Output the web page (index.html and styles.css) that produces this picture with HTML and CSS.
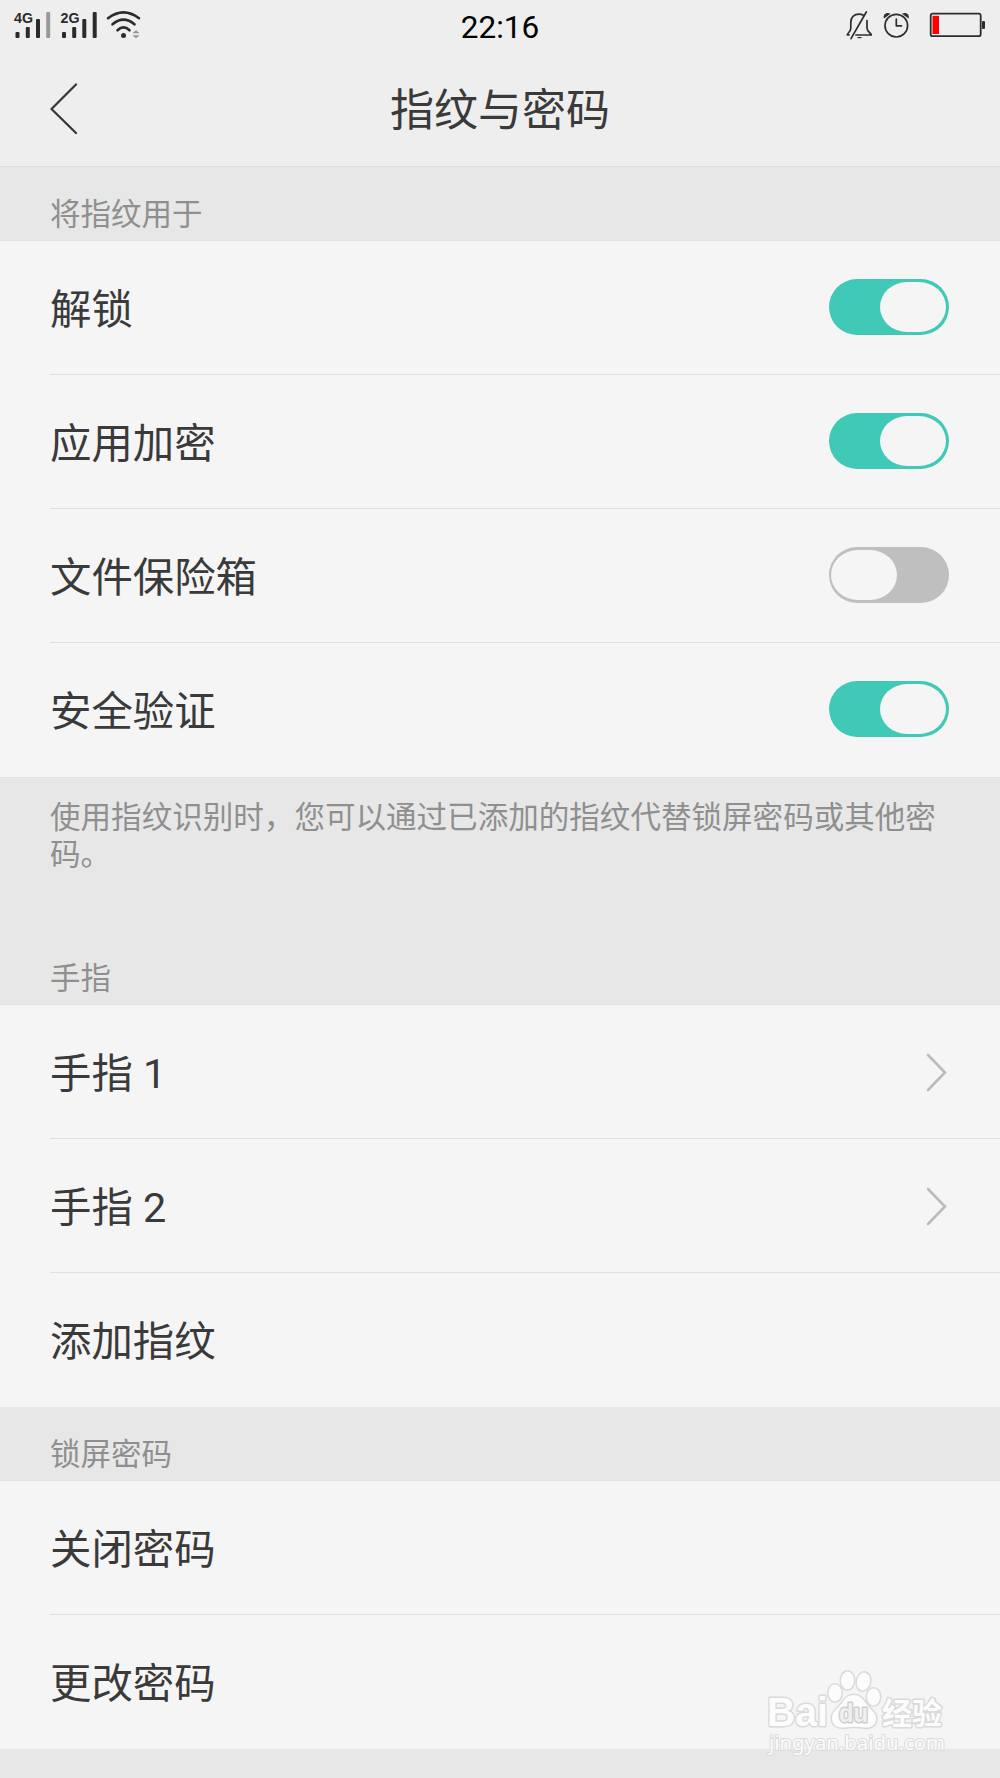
FILE: index.html
```html
<!DOCTYPE html>
<html lang="zh-CN">
<head>
  <meta charset="UTF-8" />
  <meta name="viewport" content="width=device-width, initial-scale=1.0"/>
  <title>指纹与密码</title>
  <link rel="stylesheet" href="styles.css">
</head>
<body>

  <!-- Status bar -->
  <div class="status-bar">
    <svg class="status-left" width="160" height="50" viewBox="0 0 160 50">
      <text class="net" x="14" y="22.500" textLength="19" lengthAdjust="spacingAndGlyphs">4G</text>
      <g fill="#2b2b2b">
        <rect x="15.5" y="32" width="4" height="6" rx="1"/>
        <rect x="25.8" y="27" width="4" height="11" rx="1"/>
        <rect x="36" y="19" width="4" height="19" rx="1"/>
        <rect x="46.2" y="12" width="4" height="26" rx="1" fill="#999"/>
      </g>
      <text class="net" x="60.5" y="22.500" textLength="19" lengthAdjust="spacingAndGlyphs">2G</text>
      <g fill="#2b2b2b">
        <rect x="62" y="32" width="4" height="6" rx="1"/>
        <rect x="72.2" y="27" width="4" height="11" rx="1"/>
        <rect x="82.3" y="19" width="4" height="19" rx="1"/>
        <rect x="92.7" y="12" width="4" height="26" rx="1"/>
      </g>
      <g fill="none" stroke="#2b2b2b" stroke-width="2.6" stroke-linecap="round">
        <path d="M108 18.2Q123.500 6.500 139 18.2"/>
        <path d="M112.500 24.300Q123.500 15 134.500 24.300"/>
        <path d="M117.500 30.300Q123.500 24.500 129.500 30.300"/>
      </g>
      <circle cx="123.500" cy="35.500" r="2.500" fill="#2b2b2b"/>
      <path d="M136 30.500L139 33H133ZM133 35.500H139L136 38Z" fill="#999" stroke="#999" stroke-width=".6"/>
    </svg>
    <span class="clock">22:16</span>
    <svg class="status-right" width="170" height="50" viewBox="0 0 170 50">
      <g fill="none" stroke="#2e2e2e" stroke-width="1.7" stroke-linecap="round" stroke-linejoin="round">
        <path d="M19 34.800H17.300C17.300 32.800 20.800 32.300 20.800 28V22.500C20.800 17 24 14.200 29 14.200C31 14.200 32.500 14.700 33.700 15.500M37 20.500V28C37 32.300 41.300 32.800 41.300 35H26"/>
        <path d="M36.300 12L21 38.700"/>
        <circle cx="66.300" cy="25.700" r="11.300"/>
        <path d="M66.300 19V25.800H71.500"/>
      </g>
      <path d="M27.500 37H31.500V38.200H27.500Z" fill="#2e2e2e"/>
      <path d="M54 18.500C52.500 14.500 56.500 11.500 60.500 13.700ZM78.600 18.500C80 14.500 76 11.500 72 13.700Z" fill="#2e2e2e"/>
      <rect x="100.700" y="13.700" width="50" height="22.500" rx="2" fill="none" stroke="#2e2e2e" stroke-width="1.800"/>
      <rect x="102.500" y="15.800" width="6.500" height="18.200" fill="#f00"/>
      <rect x="152" y="21" width="3" height="8" rx="1" fill="#2e2e2e"/>
    </svg>
  </div>

  <!-- Title bar -->
  <div class="title-bar">
    <svg class="back" width="28" height="52" viewBox="0 0 28 52">
      <path d="M26 1.500L1.500 26L26 50" fill="none" stroke="#383838" stroke-width="2.300" stroke-linecap="round" stroke-linejoin="round"/>
    </svg>
    <h1>指纹与密码</h1>
  </div>

  <h2 class="section-title">将指纹用于</h2>
  <ul class="list">
    <li class="row"><span class="label">解锁</span><span class="switch on"></span></li>
    <li class="row"><span class="label">应用加密</span><span class="switch on"></span></li>
    <li class="row"><span class="label">文件保险箱</span><span class="switch"></span></li>
    <li class="row"><span class="label">安全验证</span><span class="switch on"></span></li>
  </ul>
  <p class="hint">使用指纹识别时，您可以通过已添加的指纹代替锁屏密码或其他密码。</p>

  <h2 class="section-title">手指</h2>
  <ul class="list">
    <li class="row">
      <span class="label">手指 1</span>
      <svg class="arrow" width="22" height="40" viewBox="0 0 22 40"><path d="M3 3L20 20.500L3 38"/></svg>
    </li>
    <li class="row">
      <span class="label">手指 2</span>
      <svg class="arrow" width="22" height="40" viewBox="0 0 22 40"><path d="M3 3L20 20.500L3 38"/></svg>
    </li>
    <li class="row"><span class="label">添加指纹</span></li>
  </ul>

  <h2 class="section-title">锁屏密码</h2>
  <ul class="list">
    <li class="row"><span class="label">关闭密码</span></li>
    <li class="row"><span class="label">更改密码</span></li>
  </ul>

  <!-- Watermark -->
  <svg class="watermark" width="200" height="96" viewBox="0 0 200 96">
    <g class="mark">
      <text class="brand" x="7" y="56" font-size="40" textLength="61" lengthAdjust="spacingAndGlyphs">Bai</text>
      <ellipse cx="75" cy="23" rx="6.500" ry="8.500"/>
      <ellipse cx="87.500" cy="10.500" rx="6.500" ry="9"/>
      <ellipse cx="103.500" cy="11.500" rx="6.500" ry="9" transform="rotate(12 103.500 11.500)"/>
      <ellipse cx="113.500" cy="27" rx="6.500" ry="8.500"/>
      <path d="M94 25C101 25 104 31 108 36C113 42 117 44 116 50C115 57 109 58 104 57.500C98 56.500 91 56.500 84 57.500C77 58 72 55 72 48C72 41 77 40 82 33C85 28 88 25 94 25Z"/>
      <text class="brand du" x="79" y="52" font-size="26" textLength="29" lengthAdjust="spacingAndGlyphs">du</text>
      <text class="cn" x="122" y="53.500" font-size="30" textLength="60">经验</text>
      <text class="site" x="9" y="80" font-size="20" textLength="176" lengthAdjust="spacingAndGlyphs">jingyan.baidu.com</text>
    </g>
  </svg>

</body>
</html>
```
FILE: styles.css
```css
* {
  box-sizing: border-box;
}
body {
  margin: 0;
  height: 1778px;
  overflow: hidden;
  position: relative;
  background: #e7e7e7;
  color: #3a3a3a;
  font-family: Roboto, "Noto Sans CJK SC", sans-serif;
}
h1, h2, p, ul {
  margin: 0;
  padding: 0;
  font-weight: normal;
}
.status-bar {
  display: grid;
  grid-template-columns: 1fr auto 1fr;
  height: 52px;
  background: #eee;
}
.status-right {
  justify-self: end;
}
.net {
  font: bold 14.5px "Liberation Sans", sans-serif;
  fill: #2b2b2b;
}
.clock {
  color: #000;
  font-size: 31.5px;
  line-height: 56px;
}
.title-bar {
  display: grid;
  grid-template-columns: 78px 1fr 78px;
  align-items: center;
  height: 115px;
  background: #eee;
  border-bottom: 1px solid #e0e0e0;
}
.back {
  margin: 0 0 1px 50px;
}
.title-bar h1 {
  font-size: 44px;
  line-height: 60px;
  text-align: center;
  padding-top: 4px;
}
.section-title {
  height: 74px;
  padding: 25px 50px 0;
  border-bottom: 1px solid #e0e0e0;
  color: #8f8f8f;
  font-size: 30.5px;
  line-height: 46px;
}
.list {
  list-style: none;
  background: #f5f5f5;
}
.row {
  display: flex;
  align-items: center;
  justify-content: space-between;
  height: 134px;
  margin-left: 50px;
  padding-right: 51px;
  border-bottom: 1px solid #dfdfdf;
}
.row:last-child {
  border-bottom-color: #f5f5f5;
}
.label {
  padding-top: 4px;
  font-size: 41.4px;
  line-height: 60px;
}
.switch {
  display: flex;
  width: 120.5px;
  height: 56px;
  margin-bottom: 2px;
  padding: 3px 3px 3px 2px;
  border-radius: 28px;
  background: #bfbfbf;
}
.switch::before {
  content: "";
  width: 66px;
  height: 50px;
  border-radius: 27px / 25px;
  background: #f5f5f5;
}
.switch.on {
  justify-content: flex-end;
  background: #40c9b7;
}
.arrow {
  margin-right: 2px;
  fill: none;
  stroke: #bbb;
  stroke-width: 2.6;
  stroke-linecap: round;
}
.hint {
  height: 154px;
  padding: 21px 50px 0;
  border-top: 1px solid #e0e0e0;
  color: #8f8f8f;
  font-size: 30.55px;
  line-height: 37px;
}
.watermark {
  position: absolute;
  left: 760px;
  top: 1670px;
}
.mark {
  fill: #fcfcfc;
  stroke: #dadada;
  stroke-width: 3;
  stroke-linejoin: round;
  paint-order: stroke;
}
.brand {
  font-family: "Liberation Sans", sans-serif;
  font-weight: bold;
}
.du {
  fill: #f0f0f0;
  stroke: #cdcdcd;
}
.cn {
  font-family: "Noto Sans CJK SC", sans-serif;
  font-weight: bold;
}
.site {
  font-family: "Noto Sans", sans-serif;
  stroke-width: 2;
}
```
